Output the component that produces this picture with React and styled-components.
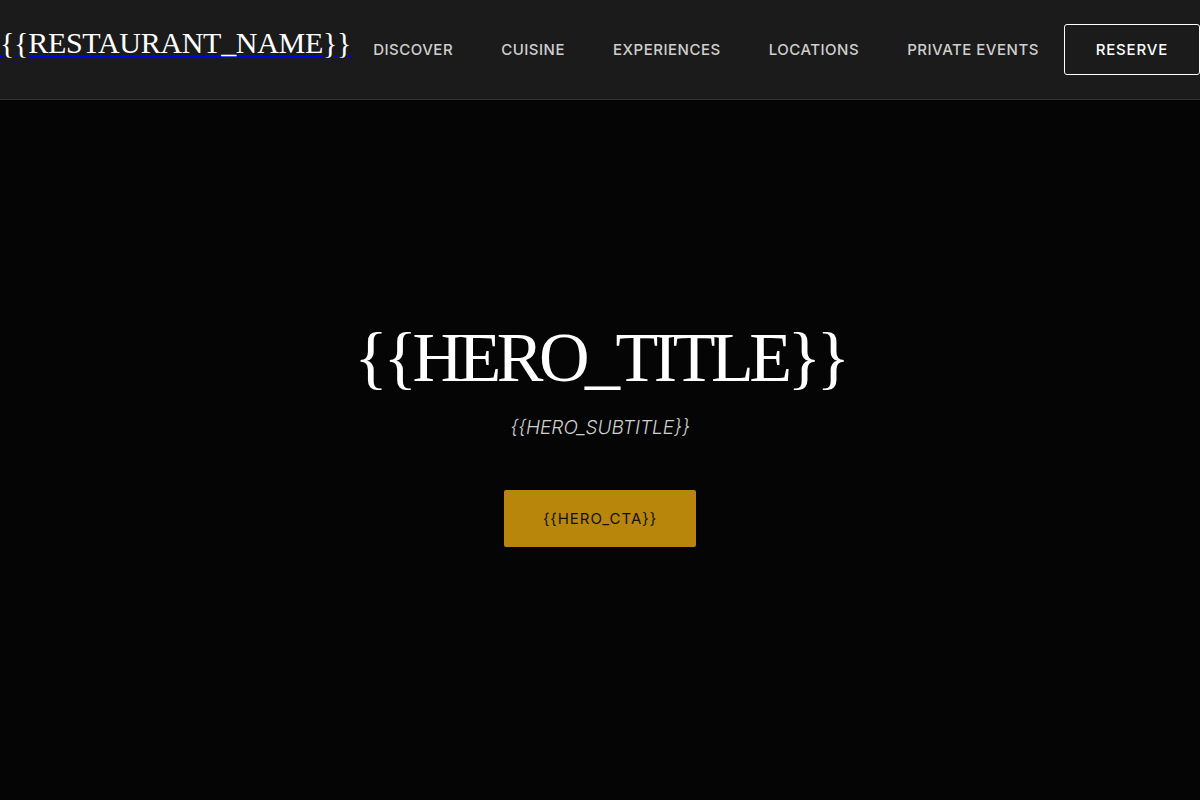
import React from "react";
import styled, { createGlobalStyle } from "styled-components";

const GlobalStyle = createGlobalStyle`
  html, body {
    margin: 0;
    padding: 0;
    background: #050505;
    overflow: hidden;
  }
  body {
    font-family: Inter, "Liberation Sans", sans-serif;
  }
`;

const Header = styled.header`
  display: flex;
  align-items: center;
  height: 99px;
  background: #1b1b1b;
  border-bottom: 1px solid #333;
  box-sizing: content-box;
  white-space: nowrap;
`;

const Logo = styled.a`
  font-family: "Liberation Serif", "DejaVu Serif", serif;
  font-size: 30px;
  letter-spacing: -0.3px;
  color: #fff;
  text-decoration: underline;
  text-decoration-color: #0000ee;
  text-underline-offset: 2px;
  margin-top: -14px;
  flex-shrink: 0;
`;

const Nav = styled.nav`
  display: flex;
  align-items: center;
  gap: 48px;
  margin-left: 22px;
`;

const NavLink = styled.a`
  font-size: 15px;
  font-weight: 500;
  letter-spacing: 0.5px;
  text-transform: uppercase;
  color: #cfcfcf;
  text-decoration: none;
`;

const ReserveButton = styled.button`
  margin-left: 25px;
  flex-shrink: 0;
  width: 136px;
  height: 51px;
  background: transparent;
  border: 1px solid #fff;
  border-radius: 3px;
  color: #fff;
  font-family: inherit;
  font-size: 15px;
  font-weight: 500;
  letter-spacing: 0.8px;
  text-transform: uppercase;
`;

const Hero = styled.section`
  display: flex;
  flex-direction: column;
  align-items: center;
  padding-top: 218px;
  height: 700px;
  box-sizing: border-box;
  text-align: center;
`;

const Title = styled.h1`
  margin: 0;
  font-family: "Liberation Serif", "DejaVu Serif", serif;
  font-weight: 400;
  font-size: 70px;
  letter-spacing: -4.5px;
  line-height: 80px;
  color: #fff;
`;

const Subtitle = styled.p`
  margin: 18px 0 0;
  font-size: 19px;
  font-style: italic;
  font-weight: 300;
  color: #d0d0d0;
`;

const CtaButton = styled.button`
  margin-top: 51px;
  width: 192px;
  height: 57px;
  border: none;
  border-radius: 2px;
  background: #b8860b;
  color: #111;
  font-family: inherit;
  font-size: 15px;
  letter-spacing: 1px;
`;

const navItems = ["Discover", "Cuisine", "Experiences", "Locations", "Private Events"];

export default function App() {
  return (
    <>
      <GlobalStyle />
      <Header>
        <Logo href="#">{"{{RESTAURANT_NAME}}"}</Logo>
        <Nav>
          {navItems.map((item) => (
            <NavLink key={item} href="#">
              {item}
            </NavLink>
          ))}
        </Nav>
        <ReserveButton>Reserve</ReserveButton>
      </Header>
      <Hero>
        <Title>{"{{HERO_TITLE}}"}</Title>
        <Subtitle>{"{{HERO_SUBTITLE}}"}</Subtitle>
        <CtaButton>{"{{HERO_CTA}}"}</CtaButton>
      </Hero>
    </>
  );
}
